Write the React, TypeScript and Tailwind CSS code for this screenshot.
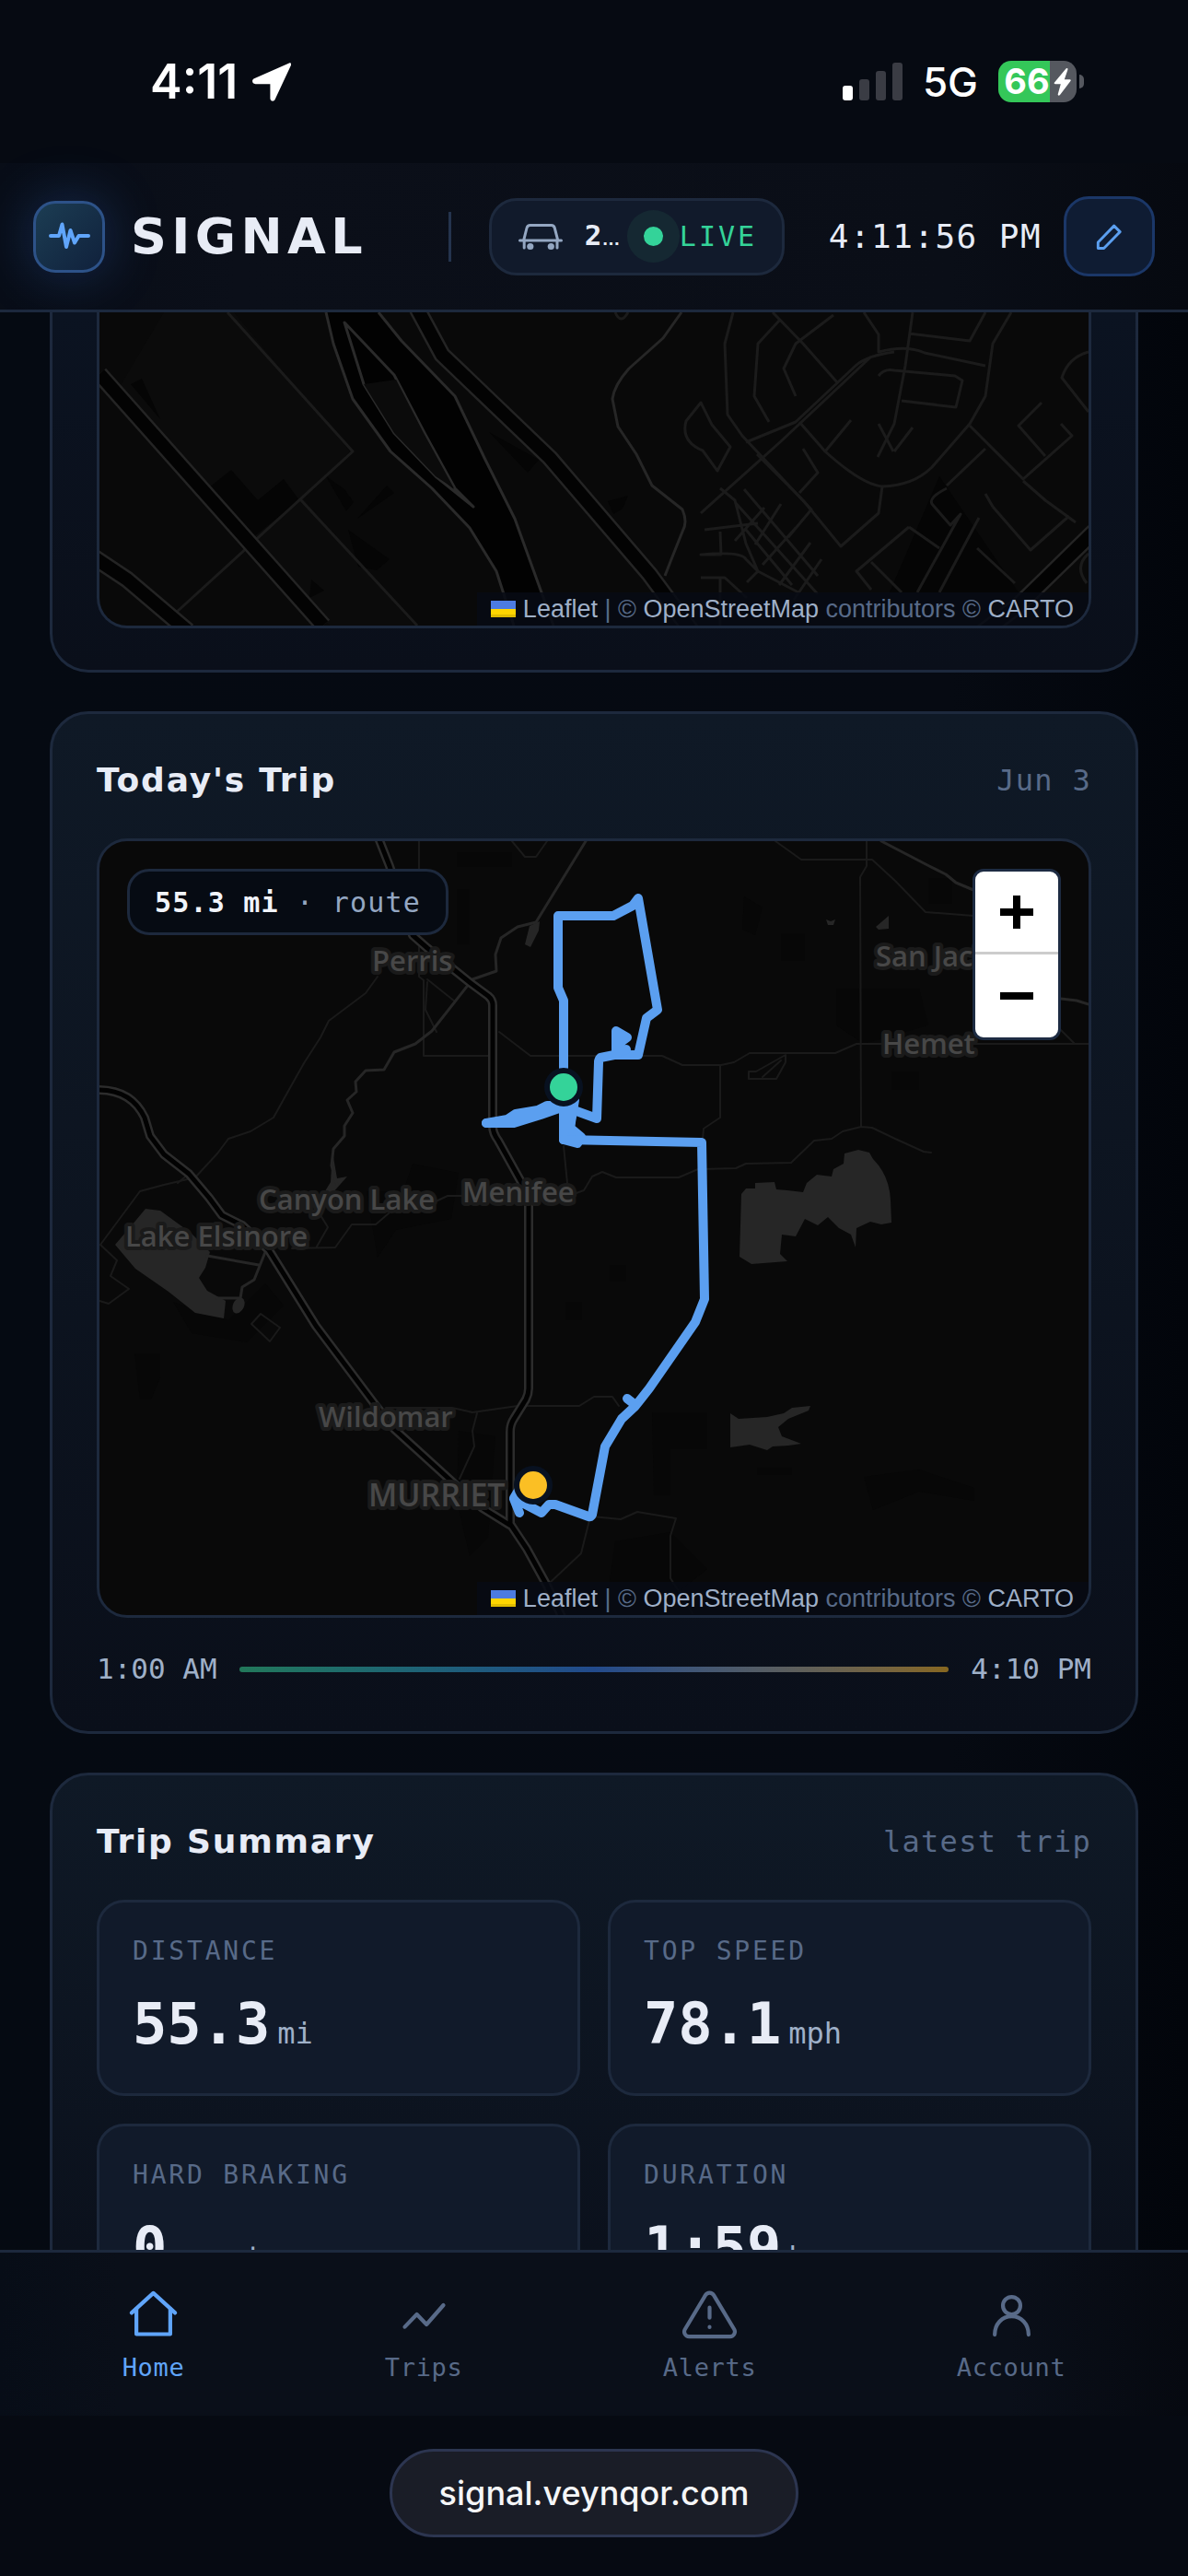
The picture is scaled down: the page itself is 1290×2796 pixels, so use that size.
import { useState } from "react";
import type { ReactNode } from "react";

type Tab = {
  id: string;
  label: string;
  icon: ReactNode;
};

type Stat = {
  label: string;
  value: string;
  unit: string;
};

const stats: Stat[] = [
  { label: "DISTANCE", value: "55.3", unit: "mi" },
  { label: "TOP SPEED", value: "78.1", unit: "mph" },
  { label: "HARD BRAKING", value: "0", unit: "events" },
  { label: "DURATION", value: "1:59", unit: "h" },
];

const tabs: Tab[] = [
  {
    id: "home",
    label: "Home",
    icon: (
      <>
        <path d="M3 11.2 12 3l9 8.2" />
        <path d="M5 9.6V20h14V9.6" />
      </>
    ),
  },
  {
    id: "trips",
    label: "Trips",
    icon: <path d="M4 17l5-5.2 4 4.2 7-8" />,
  },
  {
    id: "alerts",
    label: "Alerts",
    icon: (
      <>
        <path d="M10.29 3.86 1.82 18a2 2 0 0 0 1.71 3h16.94a2 2 0 0 0 1.71-3L13.71 3.86a2 2 0 0 0-3.42 0z" />
        <path d="M12 9v4.2M12 17v.1" />
      </>
    ),
  },
  {
    id: "account",
    label: "Account",
    icon: (
      <>
        <circle cx="12" cy="8.2" r="3.6" />
        <path d="M5 20.2c0-4.400 3-7.600 7-7.600s7 3.200 7 7.600" />
      </>
    ),
  },
];

const places = [
  { name: "Perris", x: 296, y: 141 },
  { name: "San Jacinto", x: 843, y: 136 },
  { name: "Hemet", x: 850, y: 231 },
  { name: "Menifee", x: 394, y: 392 },
  { name: "Canyon Lake", x: 173, y: 400 },
  { name: "Lake Elsinore", x: 28, y: 440 },
  { name: "Wildomar", x: 238, y: 636 },
];

function StatusBar() {
  return (
    <div className="flex h-[177px] shrink-0 items-center justify-between pl-[163px] pr-[113px] font-['Inter',sans-serif] text-white">
      <div className="flex items-center gap-4">
        <span className="text-[52px] leading-[60px] font-semibold">4:11</span>
        <svg className="h-[42px] w-[42px]" viewBox="0 0 42 42" fill="currentColor" aria-hidden="true">
          <path d="M40 .4c1.6-.8 2.8.6 2 2.400L24.600 40c-1.200 2.800-5.200 2-5.200-1.200V23.200H3.400c-3.600 0-4.600-4.400-1.400-6z" />
        </svg>
      </div>
      <div className="flex items-center gap-[22px]">
        <svg className="h-[41px] w-[65px]" viewBox="0 0 65 41" aria-hidden="true">
          <rect x="0" y="25" width="11" height="16" rx="3" fill="#fff" />
          <rect x="18" y="18" width="11" height="23" rx="3" fill="#3a3c44" />
          <rect x="36" y="9" width="11" height="32" rx="3" fill="#3a3c44" />
          <rect x="54" y="0" width="11" height="41" rx="3" fill="#3a3c44" />
        </svg>
        <span className="text-[44px] leading-[48px] font-medium">5G</span>
        <div className="flex items-center gap-[3px]">
          <div className="flex h-[45px] w-[85px] items-center justify-center gap-1 rounded-[14px] bg-[linear-gradient(to_right,#34c759_66%,#55585f_66%)]">
            <span className="text-[38px] leading-[45px] font-bold">66</span>
            <svg className="h-[30px] w-[19px]" viewBox="0 0 19 30" fill="currentColor" aria-hidden="true">
              <path d="M13.500.6 1 15.400c-.8 1-.4 1.800.8 1.800h6L4.800 28c-.4 1.800 1 2.400 2.200 1L18.400 14c.7-1 .2-1.800-1-1.800h-5.600L15.300 2c.6-1.800-.6-2.700-1.800-1.400z" />
            </svg>
          </div>
          <span className="h-[15px] w-[5px] rounded-r-full bg-[#55585f]" />
        </div>
      </div>
    </div>
  );
}

function Header() {
  return (
    <header className="flex h-[162px] shrink-0 items-center justify-between border-b-3 border-[#1d293d] bg-[linear-gradient(to_right,#080d17,#0b0f19_20%,#0a0e17_80%,#060910)] px-9">
      <div className="flex items-center">
        <div className="flex h-[78px] w-[78px] items-center justify-center rounded-3xl border-3 border-[#2d5288] bg-linear-to-br from-[#1c3d53] to-[#10213c] text-[#60a5fa] shadow-[0_0_60px_rgba(59,130,246,0.28)]">
          <svg className="h-12 w-12 shrink-0" viewBox="0 0 48 48" fill="none" stroke="currentColor" strokeWidth="4" strokeLinecap="round" strokeLinejoin="round" aria-hidden="true">
            <path d="M4 23h9l3.500-12.500L21 35l4.500-18L30 30.500l4.500-7.500H45" />
          </svg>
        </div>
        <h1 className="ml-7 w-[309px] font-['DejaVu_Sans',sans-serif] text-[54px] leading-[60px] font-black tracking-widest text-[#e8ecf6]">
          SIGNAL
        </h1>
        <span className="ml-9 h-[54px] w-[3px] bg-[#24344e]" />
      </div>
      <div className="flex items-center">
        <button
          type="button"
          className="flex h-[84px] w-[321px] items-center rounded-[30px] border-3 border-[#1d293d] bg-[#111a2b] pl-[29px] text-[#e8ecf6]"
        >
          <svg className="h-12 w-12 shrink-0 text-[#94a7c2]" viewBox="0 0 48 48" fill="none" stroke="currentColor" strokeWidth="3" strokeLinecap="round" strokeLinejoin="round" aria-hidden="true">
            <path d="M5.700 27.700 9 14.500q.8-3 3.700-3h23q2.800 0 3.600 3l3.400 13.200M1.500 28h45M6.200 28v8M42 28v8" />
            <circle cx="12.800" cy="34.500" r="3.600" fill="currentColor" stroke="none" />
            <circle cx="35.300" cy="34.500" r="3.600" fill="currentColor" stroke="none" />
          </svg>
          <span className="ml-6 w-[46px] text-left text-[31px] leading-9 font-bold whitespace-nowrap">
            2<span className="font-['Liberation_Sans',sans-serif] text-[20px]">…</span>
          </span>
          <span className="flex h-[57px] w-[57px] shrink-0 items-center justify-center rounded-full bg-[#152832]">
            <span className="h-[21px] w-[21px] rounded-full bg-[#34d399]" />
          </span>
          <span className="text-[30px] leading-9 tracking-widest text-[#34d399]">LIVE</span>
        </button>
        <time className="ml-12 text-[36px] leading-[45px] tracking-[0.04em] text-[#e8ecf6]">4:11:56 PM</time>
        <button
          type="button"
          aria-label="Edit dashboard"
          className="ml-6 flex h-[87px] w-[99px] items-center justify-center rounded-[27px] border-3 border-[#1b3768] bg-[#0f1c33] text-[#5b9ff0]"
        >
          <svg className="h-[39px] w-[39px]" viewBox="0 0 24 24" fill="none" stroke="currentColor" strokeWidth="1.800" strokeLinejoin="round" aria-hidden="true">
            <path d="M4.500 20v-4L15.200 5l4 4L8.400 20z" />
          </svg>
        </button>
      </div>
    </header>
  );
}

function Card({ title, note, children }: { title: string; note: string; children: ReactNode }) {
  return (
    <section className="rounded-[42px] border-3 border-[#1d293d] bg-linear-to-b from-[#0f1926] to-[#0a0f1a] p-12">
      <header className="mb-[39px] flex items-center justify-between">
        <h2 className="font-['DejaVu_Sans',sans-serif] text-[36px] leading-[48px] font-bold tracking-wider text-[#e8ecf6]">
          {title}
        </h2>
        <p className="text-[32px] leading-[48px] tracking-[0.04em] text-[#586a88]">{note}</p>
      </header>
      {children}
    </section>
  );
}

function Attribution() {
  return (
    <div className="absolute right-0 bottom-0 flex h-9 items-center bg-[#070b14]/85 pr-4 pl-[15px] font-['Liberation_Sans',Arial,sans-serif] text-[27px] leading-9 whitespace-nowrap text-[#586a88]">
      <svg className="mr-2 h-[18px] w-[27px]" viewBox="0 0 27 18" aria-hidden="true">
        <path fill="#4c7be1" d="M0 0h27v9H0z" />
        <path fill="#ffd500" d="M0 9h27v6H0z" />
        <path fill="#e0bc00" d="M0 15h27v3H0z" />
      </svg>
      <p>
        <a href="#leaflet" className="text-[#9fb0c8]">Leaflet</a> | ©{" "}
        <a href="#osm" className="text-[#9fb0c8]">OpenStreetMap</a> contributors ©{" "}
        <a href="#carto" className="text-[#9fb0c8]">CARTO</a>
      </p>
    </div>
  );
}

function LiveMap() {
  return (
    <div className="relative h-[343px] overflow-hidden rounded-b-[33px] border-3 border-t-0 border-[#1d293d] bg-[#090909]">
      <svg className="h-full w-full" viewBox="0 0 1074 340" preserveAspectRatio="xMidYMid slice" fill="none" strokeLinejoin="round" aria-hidden="true">
        <path d="M70 0h76l126 151-50 52 120 137H250L20 84z" fill="#0b0b0b" />
        <path d="M143 171l29 33 28-23 17 23-50 40-49-53zM246 178l20 14 10 14-8 10zM312 188l8 8-40 28zM270 236l45 32-14 12-20-4zM34 78l12-6 20 44zM423 130l54 30-12 14zM552 205l22-6-6 14-10 6zM230 290l14 12-16 8zM912 178l-54 126h140z" fill="#050505" />
        {/* local streets */}
        <g stroke="#1b1b1b" strokeWidth="3">
          <path d="M139 0l136 151L83 326M219 204l126 136M739 8l-24 26-4 57 16 28M731 0l33 34 37 42M797 3l-41 31-13 27 13 30M830 0l16 24v19q30-8 50 1l66 14M883 0l-8 58-12 63-18 36M879 23l66 8L962 0M990 0l-20 34-8 57-17 30-41 47q-20 20-54 21-22-2-62-38l-28-32" />
          <path d="M850 189l-4 29-41 36-41-50-50-50M846 69q6-8 17-6l66 6 8 5-7 29-59-7M863 43q-30 4-42 15l-65 61-54 22M838 48l-98 92-87 78M1074 43q-22 6-29 28l29 37M1023 98l-25 25 29 33M1044 121l12 13-53 47-58-58M962 148l-42 40M1003 183l24 21 33 24M970 211l41 47 42-37M970 211l-8-14" />
          <path d="M688 0l-9 34 3 77 16 23 75 80-25 30M879 233l-57 48 16 20M879 233l33 23M920 191q-20 10-16 17l20 23 11-12-47 85M955 223l-43 81M953 256l41 38M838 271l33 33M1074 262q-16 14-2 32M764 148l16 26-20 22M788 151l28-34M863 151l20-26M846 121l16 30" />
          <path d="M674 191l16 13 12 47 13 30 44 23M657 236l58-7M674 238l1 25h-22q44-4 49 5l13 13-12 12M653 288h26l24 22M674 289v51M700 192l80 94M690 206l90 100M722 212l-32 36M740 208l-28 44M756 234l-36 40M772 250l-34 46M784 268l-30 44M702 236l50 60M655 150q-24-10-18-32l16-20 12 24 20 24-14 26zM560 0q6 14 14 0" />
        </g>
        <path d="M632 0l-20 28-37 33q-16 18-18 33l6 30 20 30 17 34 33 26q6 14 0 24l-12 30-7 18" stroke="#262626" strokeWidth="3" />
        {/* freeway */}
        <path d="M246 0h57l25 31 58 60 32 67 33 66 42 116h-43l-19-59-29-47-41-43-46-40-40-57-21-60z" fill="#020202" />
        <path d="M246 0l8 34 21 60 41 57 45 40 41 43 29 47 19 59M303 0l25 31 58 60 32 67 33 66 42 116M266 11l21 67 33 53 45 47 41 33-20-20-33-60-33-63z" stroke="#2a2a2a" strokeWidth="3" />
        <path d="M287 78l33 53 45 47 20 13-33-60-30-58z" fill="#0b0b0b" />
        {/* arterials */}
        <g stroke="#242424" strokeWidth="19">
          <path d="M0 67l243 273M-6 266l36 24 66 56M345-4l27 50 117 112 108 126 46 62M1080 238l-82 80-40 30" />
        </g>
        <g stroke="#030303" strokeWidth="14">
          <path d="M0 67l243 273M-6 266l36 24 66 56M345-4l27 50 117 112 108 126 46 62M1080 238l-82 80-40 30" />
        </g>
      </svg>
      <Attribution />
    </div>
  );
}

function RouteMap() {
  return (
    <div className="relative h-[846px] overflow-hidden rounded-[33px] border-3 border-[#1d293d] bg-[#090909]">
      <svg className="h-full w-full" viewBox="0 0 1074 840" preserveAspectRatio="xMidYMid slice" fill="none" strokeLinejoin="round" strokeLinecap="round" role="img" aria-label="Route of today's trip">
        {/* built-up areas */}
        <path d="M388 12h60v16h-60zM388 52h14v60h-14zM290 380h40l10-30 50 10-8 50-60 12-20 30zM700 60l20 12-8 30-14-6zM740 100h26v30h-26zM800 160h90l10 40-70 20-30-20zM860 250h30v20h-30zM900 40h26v28h-26zM80 500l60 20 40-40 20 24-40 40-60-10zM38 556h28v26l-10 24h-12zM390 640l40 6-8 110-20 20-14-60zM554 460h18v18h-18zM506 500h18v20h-18zM600 620h60v40h-40v50h-18zM714 680h38v8h-38zM830 690l60-8 60 20v14l-60-10-50 20zM560 760l60-10 40 40-50 40h-60z" fill="#070707" />
        {/* lakes */}
        <g fill="#262626">
          <path d="M50 399l16 2 33 24 21 21-5 17-7 11 9 14 20 11-2 19-31-6-29-23-36-25-22-26 18-21z" />
          <ellipse cx="151" cy="504" rx="6" ry="9" transform="rotate(25 151 504)" />
          <path d="M253 337l5 29 11-2-16 18-13 6 11-18zM697 383l5-6h10v-6l21-1 2 8 12 1 17 2 4-10 11-9 16 2 2-8 11-6 1-11 15-4 12 3 4 7q18 18 19 45l1 24-11 2-12-3-15 7-1 21-5-14-13-7-12-12-11 9-14-7-10 19-15-2-2 21 8 8-39 3-13-8zM685 621l9 6 31-2 18-4 9-6 20-2-2 5-22 9-11 9 4 10 21 8-14 2-17 1-6 4-19-6-21 3zM843 93l14-12v14l-11 1zM789 85l5 2 5-2-2 6h-6zM467 92l11-5-1 10-9 18-6-3z" />
        </g>
        <path d="M117 450l56 10M180 446l-12 30-13 8-2 12h-25" stroke="#262626" strokeWidth="3" />
        <g stroke="#1a1a1a" strokeWidth="2">
          <path d="M302 147l-13 18-40 30-9 18-18 28-18 32-15 27-25 15-24 8-12 16-24 26-34 8-26 7-43 58 18 17-7 17 20 14-22 16-10-3M347 0v147l5 4v82h71M434 207l34 26h143l22 10h42l14-3 17-10h93l23-10h252" />
          <path d="M833 0v27l-7 12 1 270M734 0l28 20h77l25 23 33 34 52 4M674 243v57l-18 12-1 11M515 383l11-4 9-15 11-5 15 6h68l21-9 41-1 11-5 49-1 25-24 19-2 12-8 20-5 12 1 25 12 31 14 8 1M311 615h72l22 5 49-7h67l16-10h20l7 10M410 621l-5 19 2 17-16 35M535 733l31 3 18-8 42 7-6 19v46l24 38M532 737l-9 36-33 31" />
          <path d="M363 392l15-7h16M240 406l8 13-12 21M209 442l47-1 18-25h26l14-12M504 331l4 40M97 361l-12 10M1044 205l14 14M448 0l14 17h12L486 0M356 153l-2 30 12 24M356 150l30 24M705 250h8l32-18v8l-10 18h-30zM720 256l20-18M165 524l10-11 21 15-11 15z" />
        </g>
        <path d="M528 0l-54 88-20 5-18 12-6 18 1 18-26 9-44 56-18 14-23 9-11 19-20 1-11 12 1 11-10 9 6 14-9 14v11l-12 14-2 18 6 21M849 0l52 27 18 9 11 9 19 8M1044 171l17 2 13 4" stroke="#262626" strokeWidth="3" />
        {/* interstates */}
        <g stroke="#2c2c2c" strokeWidth="10">
          <path d="M302-6l13 33 25 75 16 14 27 22 20 16 19 14q5 4 5 10v131q0 8 6 16l25 45q8 16 8 26v198q0 6-3 12l-13 21q-4 6-4 14v100l18 27 22 40 16 34" />
          <path d="M-6 270q40-2 55 30l6 20 15 20 27 21 22 26 14 19 22 11 29 27 51 82 63 84 22 28 67 61 29 25 29 18" />
        </g>
        <g stroke="#020202" strokeWidth="5">
          <path d="M302-6l13 33 25 75 16 14 27 22 20 16 19 14q5 4 5 10v131q0 8 6 16l25 45q8 16 8 26v198q0 6-3 12l-13 21q-4 6-4 14v100l18 27 22 40 16 34" />
          <path d="M-6 270q40-2 55 30l6 20 15 20 27 21 22 26 14 19 22 11 29 27 51 82 63 84 22 28 67 61 29 25 29 18" />
        </g>
        <g fill="#474747" stroke="#1a1a1a" strokeWidth="8" paintOrder="stroke" fontFamily="'Open Sans', sans-serif" fontWeight="600" fontSize="31">
          {places.map((place) => (
            <text key={place.name} x={place.x} y={place.y}>
              {place.name}
            </text>
          ))}
          <text x="292" y="722" fontSize="34">MURRIET</text>
        </g>
        {/* driven route */}
        <g stroke="#5b9ff0" strokeWidth="10">
          <path d="M504 267v-94l-6-14V81h60l21-11 6-8 21 121-12 9-9 40h-26l-15 3q-2 2-2 5l-2 61-22-8h-13" />
          <path d="M561 230v-24l12 7-8 6-2 10 9-3M420 306h30l29-9 20-7 5-3M504 267v57l15 4 4-7-12-10 5-30M510 290v30" />
          <path d="M562 208l8 4-8 6zM420 306h27l32-10 25-9h-18l-10 5-24 4-9 6zM504 290l10-4-3 25 8 10-15 2z" fill="#5b9ff0" />
          <path d="M504 324l150 3 3 170-10 25-50 72-15 19-15 14-18 30-14 74q-1 3-4 2l-36-13h-7l-8 9-19-10-11-5 6 15M450 713l6-10M573 605l9 7" />
        </g>
        <circle cx="504" cy="267" r="18" fill="#34d399" stroke="#081120" strokeWidth="6" />
        <circle cx="471" cy="699" r="18" fill="#fbbf24" stroke="#081120" strokeWidth="6" />
      </svg>
      <p className="absolute top-[30px] left-[30px] flex h-[72px] items-center rounded-3xl border-3 border-[#1d293d] bg-[#060b13] px-[27px] text-[30px] tracking-[0.04em] whitespace-pre text-[#94a7c2]">
        <strong className="font-bold text-[#f1f4fa]">55.3 mi</strong> · route
      </p>
      <div className="absolute top-[30px] right-[30px] flex w-24 flex-col overflow-hidden rounded-xl border-3 border-[#1d2b42] bg-white text-black">
        <button type="button" aria-label="Zoom in" className="flex h-[90px] items-center justify-center border-b-3 border-[#cccccc]">
          <svg className="h-9 w-9" viewBox="0 0 36 36" stroke="currentColor" strokeWidth="8" aria-hidden="true">
            <path d="M0 18h36M18 0v36" />
          </svg>
        </button>
        <button type="button" aria-label="Zoom out" className="flex h-[90px] items-center justify-center">
          <svg className="h-9 w-9" viewBox="0 0 36 36" stroke="currentColor" strokeWidth="8" aria-hidden="true">
            <path d="M0 18h36" />
          </svg>
        </button>
      </div>
      <Attribution />
    </div>
  );
}

function StatTile({ stat }: { stat: Stat }) {
  return (
    <div className="rounded-[30px] border-3 border-[#1d293d] bg-[#111a2a] px-9 pt-9 pb-[33px]">
      <p className="text-[28px] leading-[33px] tracking-widest text-[#586a88]">{stat.label}</p>
      <p className="mt-[21px] h-[84px] text-[62px] leading-[84px] font-bold whitespace-nowrap text-[#e8ecf6]">
        {stat.value}
        <span className="ml-2 text-[32px] leading-9 font-normal text-[#9fb0c8]">{stat.unit}</span>
      </p>
    </div>
  );
}

export default function App() {
  const [activeTab, setActiveTab] = useState("home");

  return (
    <div className="flex h-screen flex-col bg-[#060a12] font-['DejaVu_Sans_Mono',monospace]">
      <StatusBar />
      <Header />

      <main className="min-h-0 flex-1 overflow-y-auto bg-[linear-gradient(to_right,#050a12,#060a12_80%,#02050b)] px-[54px] [scrollbar-width:none]">
        <div className="flex flex-col gap-[42px]">
          <section className="rounded-b-[42px] border-3 border-t-0 border-[#1d293d] bg-linear-to-b from-[#0b1321] to-[#0a0f1a] px-12 pb-[45px]">
            <LiveMap />
          </section>

          <Card title="Today's Trip" note="Jun 3">
            <RouteMap />
            <div className="mt-9 flex items-center gap-6 text-[31px] leading-[39px] text-[#9fb0c8]">
              <time>1:00 AM</time>
              <span className="h-1.5 flex-1 rounded-full bg-linear-to-r from-[#22785a] via-[#224a8c] to-[#87671f]" />
              <time>4:10 PM</time>
            </div>
          </Card>

          <Card title="Trip Summary" note="latest trip">
            <div className="grid grid-cols-2 gap-[30px]">
              {stats.map((stat) => (
                <StatTile key={stat.label} stat={stat} />
              ))}
            </div>
          </Card>
        </div>
      </main>

      <nav className="flex shrink-0 justify-around border-t-3 border-[#1d293d] bg-[linear-gradient(to_right,#070d17,#0a0f19_10%,#0a0f19_85%,#060910)] px-6 py-9">
        {tabs.map((tab) => (
          <button
            key={tab.id}
            type="button"
            onClick={() => setActiveTab(tab.id)}
            className={
              activeTab === tab.id
                ? "flex flex-col items-center gap-[9px] text-[#60a5fa]"
                : "flex flex-col items-center gap-[9px] text-[#586a88]"
            }
          >
            <svg className="h-[63px] w-[63px]" viewBox="0 0 24 24" fill="none" stroke="currentColor" strokeWidth="1.600" strokeLinecap="round" strokeLinejoin="round" aria-hidden="true">
              {tab.icon}
            </svg>
            <span className="text-[27px] leading-[33px] tracking-wide">{tab.label}</span>
          </button>
        ))}
      </nav>

      <footer className="flex h-[174px] shrink-0 items-start justify-center pt-9">
        <a
          href="https://signal.veynqor.com"
          className="flex h-24 items-center rounded-full border-3 border-[#2c3550] bg-[#1a1d27] px-[51px] font-['Inter',sans-serif] text-[36px] font-medium text-[#f5f6f8]"
        >
          signal.veynqor.com
        </a>
      </footer>
    </div>
  );
}
